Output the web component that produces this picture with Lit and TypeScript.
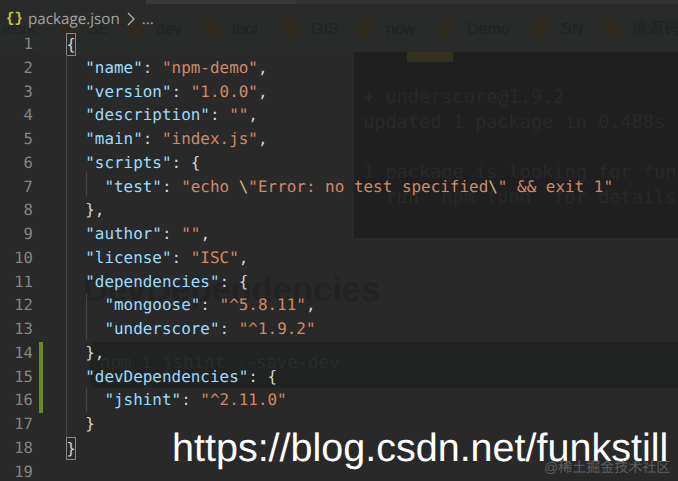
import { LitElement, html, css } from "lit";
import { customElement } from "lit/decorators.js";

type Tok = [string, string];
const k = (s: string): Tok => ["k", s];
const v = (s: string): Tok => ["v", s];
const p = (s: string): Tok => ["p", s];
const lines: { indent: number; toks: Tok[] }[] = [
  { indent: 0, toks: [["b", "{"]] },
  { indent: 1, toks: [k('"name"'), p(": "), v('"npm-demo"'), p(",")] },
  { indent: 1, toks: [k('"version"'), p(": "), v('"1.0.0"'), p(",")] },
  { indent: 1, toks: [k('"description"'), p(": "), v('""'), p(",")] },
  { indent: 1, toks: [k('"main"'), p(": "), v('"index.js"'), p(",")] },
  { indent: 1, toks: [k('"scripts"'), p(": {")] },
  { indent: 2, toks: [k('"test"'), p(": "), v('"echo '), ["e", "\\"], v('"Error: no test specified'), ["e", "\\"], v('" && exit 1"')] },
  { indent: 1, toks: [p("},")] },
  { indent: 1, toks: [k('"author"'), p(": "), v('""'), p(",")] },
  { indent: 1, toks: [k('"license"'), p(": "), v('"ISC"'), p(",")] },
  { indent: 1, toks: [k('"dependencies"'), p(": {")] },
  { indent: 2, toks: [k('"mongoose"'), p(": "), v('"^5.8.11"'), p(",")] },
  { indent: 2, toks: [k('"underscore"'), p(": "), v('"^1.9.2"')] },
  { indent: 1, toks: [p("},")] },
  { indent: 1, toks: [k('"devDependencies"'), p(": {")] },
  { indent: 2, toks: [k('"jshint"'), p(": "), v('"^2.11.0"')] },
  { indent: 1, toks: [p("}")] },
  { indent: 0, toks: [["b", "}"]] },
  { indent: 0, toks: [] },
];

const bookmarks: [string, number][] = [
  ["work", 2], ["SE", 88], ["dev", 156], ["tool", 232], ["GIS", 311],
  ["now", 386], ["Demo", 467], ["SN", 561], ["读源码", 632],
];

const guides: [number, number, number][] = [
  [66, 22, 382],
  [86, 139, 24],
  [86, 260, 47],
  [86, 355, 24],
];

@customElement("app-root")
export class AppRoot extends LitElement {
  static styles = css`
    :host { display: block; width: 678px; height: 481px; overflow: hidden; }
    .page { position: relative; width: 678px; height: 481px; background: #292929; overflow: hidden;
      font-family: "DejaVu Sans Mono", monospace; text-rendering: geometricPrecision; }
    .top { position: absolute; left: 146px; width: 150px; top: 0; height: 4px; background: #383838; }
    .top2 { position: absolute; left: 296px; right: 0; top: 0; height: 4px; background: #313131; }
    .bar { position: absolute; left: 0; right: 0; top: 4px; height: 48px; background: #282b2a; }
    .bm { position: absolute; top: 16px; font: 16px/20px "Liberation Sans", "Noto Sans CJK SC", sans-serif; color: #202322; white-space: nowrap; }
    .folder { position: absolute; top: 16px; width: 15px; height: 17px; background: #2f2a20; border-radius: 2px; }
    .term { position: absolute; left: 354px; right: 0; top: 52px; height: 186px; background: #1f1f1f; color: #282828; font: 18.6px/25px "DejaVu Sans Mono", monospace; white-space: pre; padding: 33px 0 0 9px; box-sizing: border-box; overflow: hidden; }
    .hl { position: absolute; left: 53px; top: 0; width: 46px; height: 10px; background: #34301f; }
    .ghost-h { position: absolute; left: 83px; top: 270px; font: 700 34.5px/40px "Liberation Sans", sans-serif; color: #232323; white-space: nowrap; }
    .cmd { position: absolute; left: 90px; right: 0; top: 342px; height: 46px; background: #212322; border-radius: 6px 0 0 6px; color: #2a2c2b; font: 17.3px/43px "DejaVu Sans Mono", monospace; padding-left: 10px; white-space: pre; }
    .crumbs { position: relative; height: 33px; padding: 4px 0 0 6px; box-sizing: border-box; display: flex; align-items: center; font: 15.2px/20px "Open Sans", "Noto Sans", sans-serif; color: #a4a4a4; }
    .braces { color: #cfc04a; font: 700 14px/16px "Liberation Mono", monospace; width: 22px; }
    .chev { display: block; margin: 0 7px; }
    .code { position: relative; }
    .row { display: flex; height: 23.75px; line-height: 23.75px; font-size: 15.95px; white-space: pre; }
    .num { width: 33px; text-align: right; color: #858585; flex: none; font-size: 15.6px; }
    .gutter { width: 33px; flex: none; position: relative; }
    .gutter.mod::before { content: ""; position: absolute; left: 6px; top: 0; bottom: 0; width: 4px; background: #6a8c1e; }
    .text { position: relative; flex: none; line-height: 22px; }
    .k { color: #9cdcfe; } .v { color: #d0896a; } .p { color: #d4d4d4; } .e { color: #d7ba7d; }
    .b { color: #d4d4d4; box-shadow: inset 0 0 0 1px #888; display: inline-block; width: 10px; height: 23px; line-height: 23px; text-align: center; }
    .guide { position: absolute; width: 1px; background: #454545; }
    .wm { position: absolute; left: 172px; top: 425px; font: 39.5px/46px "Liberation Sans", sans-serif; color: #fff; white-space: nowrap; }
    .jj { position: absolute; left: 544px; top: 458px; font: 14px/18px "Liberation Sans", "Noto Sans CJK SC", sans-serif; color: #5e5e5e; white-space: nowrap; }
  `;

  render() {
    return html`<div class="page">
      <div class="top"></div><div class="top2"></div>
      <div class="bar">
        ${bookmarks.map(([t, x], i) => html`
          ${i > 0 ? html`<span class="folder" style="left:${x - 28}px"></span>` : ""}
          <span class="bm" style="left:${x}px">${t}</span>`)}
      </div>
      <div class="term"><span class="hl"></span>+ underscore@1.9.2
updated 1 package in 0.488s

1 package is looking for funding
  run \`npm fund\` for details</div>
      <div class="ghost-h">DevDependencies</div>
      <div class="cmd">npm i jshint --save-dev</div>
      <div class="crumbs">
        <span class="braces">{}</span>
        <span>package.json</span>
        <svg class="chev" width="8" height="14" viewBox="0 0 8 14"><path d="M1 1 7 7 1 13" fill="none" stroke="#b0b0b0" stroke-width="1.3"/></svg>
        <span>...</span>
      </div>
      <div class="code">
        ${lines.map((l, i) => html`<div class="row">
          <span class="num">${i + 1}</span>
          <span class="gutter ${i >= 13 && i <= 15 ? "mod" : ""}"></span>
          <span class="text">${"  ".repeat(l.indent)}${l.toks.map(([c, s]) => html`<span class=${c}>${s}</span>`)}</span>
        </div>`)}
        ${guides.map(([x, y, h]) => html`<span class="guide" style="left:${x}px;top:${y}px;height:${h}px"></span>`)}
      </div>
      <div class="wm">https://blog.csdn.net/funkstill</div>
      <div class="jj">@稀土掘金技术社区</div>
    </div>`;
  }
}
